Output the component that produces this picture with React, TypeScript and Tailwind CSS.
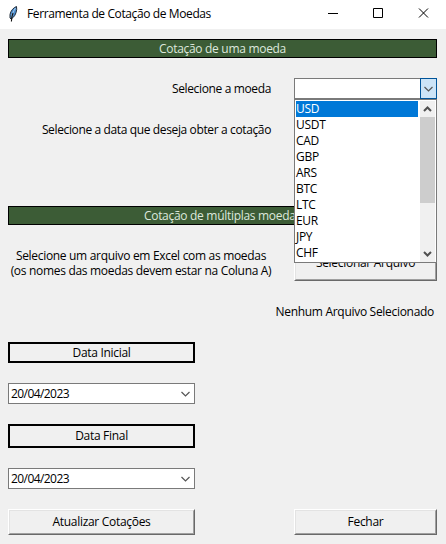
import React from "react";

const currencies = ["USD", "USDT", "CAD", "GBP", "ARS", "BTC", "LTC", "EUR", "JPY", "CHF"];

function Chevron() {
  return (
    <svg width="9" height="6" viewBox="0 0 9 6" fill="none" stroke="#555" strokeWidth="1.2">
      <path d="M.5 1 4.5 5 8.5 1" />
    </svg>
  );
}

function ScrollArrow({ up = false }: { up?: boolean }) {
  return (
    <svg width="9" height="6" viewBox="0 0 9 6" fill="none" stroke="#505050" strokeWidth="2">
      <path d={up ? "M1 5 4.5 1.5 8 5" : "M1 1 4.5 4.5 8 1"} />
    </svg>
  );
}

function Feather() {
  return (
    <svg width="11" height="16" viewBox="0 0 11 16">
      <path d="M8.5.5C5.5 1.5 2.5 5 2 8.5L2 12 3 13C6 11.5 8.2 8 8.7 3.5Z" fill="#4d8fd0" stroke="#222c38" strokeWidth="1" />
      <path d="M7.5 2C5.5 5 3.8 8.5 3.3 12" stroke="#a5c8e8" strokeWidth="1" fill="none" />
      <path d="M5 7C3.8 10 3.4 12.5 3.4 15.5" stroke="#111" strokeWidth="1.1" fill="none" />
    </svg>
  );
}

function Banner({ children }: { children: React.ReactNode }) {
  return (
    <div className="flex h-[19px] items-center justify-center border border-black bg-[#3c5c36] text-[#dde8dd]">
      {children}
    </div>
  );
}

function Button({ children }: { children: React.ReactNode }) {
  return (
    <button className="flex h-full w-full border border-t-white border-l-white border-r-[#696969] border-b-[#696969]">
      <span className="flex h-full w-full items-center justify-center border border-t-[#e3e3e3] border-l-[#e3e3e3] border-r-[#a0a0a0] border-b-[#a0a0a0] pb-px">
        {children}
      </span>
    </button>
  );
}

function DateBox() {
  return (
    <div className="flex h-[21px] items-center justify-between border border-[#7a7a7a] bg-white pr-1 pl-[2px]">
      <span className="tracking-[-0.57px]">20/04/2023</span>
      <Chevron />
    </div>
  );
}

function CurrencyList() {
  return (
    <div className="absolute top-[21px] left-0 z-10 flex h-[164px] w-[143px] justify-between border border-[#7a7a7a] bg-white p-px pb-0">
      <ul className="w-[122px]">
        {currencies.map((c, i) => (
          <li key={c} className={i === 0 ? "h-4 bg-[#0078d7] leading-[15px] text-white" : "h-4 leading-[15px]"}>
            {c}
          </li>
        ))}
      </ul>
      <div className="flex w-[15px] flex-col items-center bg-[#f0f0f0]">
        <div className="flex h-4 shrink-0 items-center"><ScrollArrow up /></div>
        <div className="h-[86px] w-full bg-[#cdcdcd]" />
        <div className="mt-auto flex h-4 items-center"><ScrollArrow /></div>
      </div>
    </div>
  );
}

export default function App() {
  return (
    <div className="h-[544px] w-[446px] overflow-hidden bg-[#f0f0f0] font-['Open_Sans','Noto_Sans',sans-serif] text-[12px] leading-[15px] tracking-[-0.3px] whitespace-nowrap text-black">
      <header className="flex h-[29px] items-center bg-white pb-[2px] pl-2">
        <Feather />
        <h1 className="ml-2 flex-1 tracking-[-0.39px]">Ferramenta de Cotação de Moedas</h1>
        <svg className="mt-[2px]" width="118" height="29" viewBox="0 0 118 29" fill="none" stroke="black">
          <path d="M0 13.5H10M45.5 8.5H54.5V17.5H45.5ZM91 8.5 100 17.5M100 8.5 91 17.5" />
        </svg>
      </header>
      <main className="px-2 pt-[10px] pr-[9px]">
        <Banner>Cotação de uma moeda</Banner>
        <section className="flex h-[148px] pt-5">
          <div className="w-[263px] text-right">
            <p className="mt-[3px] tracking-[-0.36px]">Selecione a moeda</p>
            <p className="mt-[26px] tracking-[-0.37px]">Selecione a data que deseja obter a cotação</p>
          </div>
          <div className="relative ml-[23px] h-[21px] w-[143px]">
            <div className="flex h-[21px] border border-[#7a7a7a] bg-white">
              <div className="-my-px -mr-px ml-auto flex w-[17px] items-center justify-center border border-[#005499] bg-[#cce4f7]">
                <Chevron />
              </div>
            </div>
            <CurrencyList />
          </div>
        </section>
        <Banner>Cotação de múltiplas moedas</Banner>
        <section className="flex h-[56px] pt-[20px]">
          <p className="mt-[3px] w-[266px] text-center tracking-[-0.31px]">
            Selecione um arquivo em Excel com as moedas
            <br />
            (os nomes das moedas devem estar na Coluna A)
          </p>
          <div className="ml-5 h-9 w-[143px]"><Button>Selecionar Arquivo</Button></div>
        </section>
        <p className="mt-[23px] pr-[3px] text-right">Nenhum Arquivo Selecionado</p>
        <section className="mt-[23px] w-[187px]">
          <div className="flex h-[21px] items-center justify-center border-2 border-black">Data Inicial</div>
          <div className="mt-5"><DateBox /></div>
          <div className="mt-5 flex h-6 items-center justify-center border-2 border-black pb-px">Data Final</div>
          <div className="mt-5"><DateBox /></div>
        </section>
        <footer className="mt-5 flex h-[26px] justify-between">
          <div className="w-[187px]"><Button>Atualizar Cotações</Button></div>
          <div className="w-[143px]"><Button>Fechar</Button></div>
        </footer>
      </main>
    </div>
  );
}
